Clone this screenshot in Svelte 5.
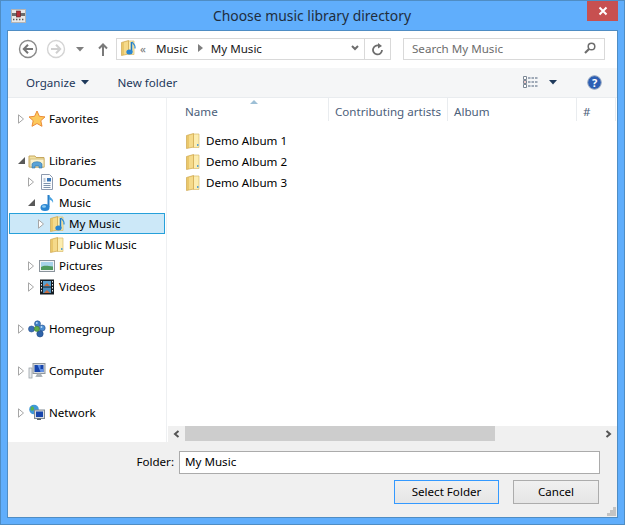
<script>
  const tree = [
    { label: "Favorites", icon: "star", depth: 0, arrow: "closed" },
    { gap: true },
    { label: "Libraries", icon: "library", depth: 0, arrow: "open" },
    { label: "Documents", icon: "doc", depth: 1, arrow: "closed" },
    { label: "Music", icon: "note", depth: 1, arrow: "open" },
    { label: "My Music", icon: "musicfolder", depth: 2, arrow: "closed", selected: true },
    { label: "Public Music", icon: "folder", depth: 2 },
    { label: "Pictures", icon: "picture", depth: 1, arrow: "closed" },
    { label: "Videos", icon: "film", depth: 1, arrow: "closed" },
    { gap: true },
    { label: "Homegroup", icon: "home", depth: 0, arrow: "closed" },
    { gap: true },
    { label: "Computer", icon: "computer", depth: 0, arrow: "closed" },
    { gap: true },
    { label: "Network", icon: "network", depth: 0, arrow: "closed" }
  ];

  const albums = ["Demo Album 1", "Demo Album 2", "Demo Album 3"];
  const columns = [
    { label: "Name", cls: "c-name" },
    { label: "Contributing artists", cls: "c-artist" },
    { label: "Album", cls: "c-album" },
    { label: "#", cls: "c-num" }
  ];
</script>

{#snippet icon(name)}
  <svg class="ico" width="18" height="18" viewBox="0 0 18 18">
    {#if name === "star"}
      <path d="M9 1l2.400 5.300 5.600.6-4.200 3.800 1.200 5.600L9 13.500l-5 2.800 1.200-5.600L1 6.900l5.600-.6z" fill="#fcc95c" stroke="#ec8c38" />
    {:else if name === "library"}
      <path d="M1 4h6l1 1.500h8V15H1z" fill="#f3e2a2" stroke="#c6a75e" />
      <rect x="2" y="7" width="14" height="8" fill="#fbf3d0" stroke="#d4bd7c" />
      <path d="M4 12c1-3 9-3 10 0v4h-3v-2H7v2H4z" fill="#5ba3d6" stroke="#2f74a8" stroke-width=".6" />
    {:else if name === "doc"}
      <path d="M3.500 1.500h8l3 3v12h-11z" fill="#fbfcfe" stroke="#8e9aae" />
      <rect x="9" y="5" width="4" height="3.500" fill="#3c78b8" />
      <path d="M5.500 6h2M5.500 8h2M5.500 10.500h7M5.500 12.500h7M5.500 14.500h7" stroke="#7e93ad" />
    {:else if name === "note"}
      <path d="M10.500 1v12" stroke="#2a7fc8" stroke-width="2" />
      <path d="M11 1c1 3 5 3.500 4 8-.6-2.500-2.500-3-4-3.500z" fill="#4aa3e0" />
      <ellipse cx="7" cy="13.500" rx="4.500" ry="3.500" fill="#2a86d2" />
      <ellipse cx="6" cy="12.500" rx="2" ry="1.200" fill="#8ccbf2" />
    {:else if name === "folder" || name === "musicfolder"}
      <path d="M9 2h6v13.500H9z" fill="#fcedb0" stroke="#d8bb6c" stroke-width=".7" />
      <path d="M2.500 3.500L9.500 1.500V15l-7 1.500z" fill="#eac76a" stroke="#cfa850" stroke-width=".7" />
      <path d="M5 3.500L9 2.500v12l-4 1z" fill="#f5da8a" />
      {#if name === "musicfolder"}
        <path d="M12.500 3v10" stroke="#1f78c4" stroke-width="1.600" />
        <path d="M13 3c2 2 3.500 3 3 6.500" fill="none" stroke="#2f8dd4" stroke-width="1.200" />
        <ellipse cx="10.500" cy="13" rx="3.200" ry="2.500" fill="#2a86d2" />
      {:else}
        <rect x="13" y="12" width="1.500" height="2" fill="#5ba3d6" />
      {/if}
    {:else if name === "picture"}
      <rect x="1.500" y="3.500" width="15" height="11" fill="#f2f4f6" stroke="#8b949c" />
      <rect x="3" y="5" width="12" height="8" fill="#a8d4ea" />
      <path d="M3 10c3-2 6-1.500 12-.5V13H3z" fill="#4f9a5e" />
    {:else if name === "film"}
      <rect x="2" y="1.500" width="14" height="15" fill="#141c22" />
      <rect x="5" y="3" width="8" height="5.500" fill="#5aa0d0" />
      <rect x="5" y="9.500" width="8" height="5.500" fill="#4b8cbc" />
      <path d="M6 8l3-3 3 3M6 15l3-3 3 3" fill="#c96a3c" />
      <path d="M3.500 3v12M14.500 3v12" stroke="#e4e8ec" stroke-dasharray="1.500 1.500" />
    {:else if name === "home"}
      <circle cx="9.500" cy="3.800" r="3" fill="#3f7fc4" stroke="#28528f" stroke-width=".6" />
      <circle cx="3.500" cy="9" r="3" fill="#3a6fb4" stroke="#28528f" stroke-width=".6" />
      <circle cx="14.200" cy="8" r="3" fill="#4a8bd0" stroke="#28528f" stroke-width=".6" />
      <circle cx="12" cy="13.800" r="3.200" fill="#2f63a8" stroke="#214a85" stroke-width=".6" />
      <circle cx="8.800" cy="8.800" r="2.600" fill="#5fae4a" stroke="#3d7a30" stroke-width=".6" />
      <circle cx="8.800" cy="3" r=".9" fill="#bcdcf6" />
      <circle cx="13.500" cy="7" r=".9" fill="#bcdcf6" />
    {:else if name === "computer"}
      <rect x="1" y="6" width="3" height="10" fill="#e8eaec" stroke="#9aa2a8" stroke-width=".8" />
      <rect x="5" y="1.500" width="12" height="10" fill="#d6dade" stroke="#8f979d" />
      <rect x="6.500" y="3" width="9" height="7" fill="#1645ac" />
      <path d="M9.500 3h3v4h3v3h-3z" fill="#5f8fe6" />
      <path d="M9.500 11.500h3l1 2.500h-5zM7.500 14.500h7" fill="#b4babf" stroke="#9aa2a8" stroke-width=".7" />
    {:else if name === "network"}
      <circle cx="6" cy="5.500" r="4.800" fill="#3f98d8" />
      <path d="M3 3c2-1 3 0 3 2s-2 2-3.500 1zM7 7.500c2 0 2.500 1.500 1 2.500z" fill="#58b24a" />
      <rect x="6.500" y="6" width="10" height="8.500" fill="#d8dde2" stroke="#7f8a94" />
      <rect x="8" y="7.500" width="7" height="5.500" fill="#1645ac" />
      <path d="M9 14.500h4v1.500H9z" fill="#59636b" />
    {/if}
  </svg>
{/snippet}

{#snippet caret(dark)}
  <svg class="caret" width="8" height="5" viewBox="0 0 8 5"><path d="M0 0h8L4 4.500z" fill={dark ? "#1e395b" : "#7f7f7f"} /></svg>
{/snippet}

<div class="window">
  <header class="titlebar">
    <svg class="appicon" width="15" height="14" viewBox="0 0 15 14">
      <rect x="0.500" y="0.500" width="14" height="13" fill="#e8e8e8" stroke="#b4b4b4" />
      <rect x="1" y="4" width="13" height="3" fill="#6d6d6d" />
      <rect x="5.500" y="2" width="4" height="6" fill="#b5303a" stroke="#5a2226" stroke-width=".6" />
      <path d="M2 10.500h2M5 10.500h2M8 10.500h2M11 10.500h2" stroke="#555" stroke-dasharray="1 .6" stroke-width="1.500" />
    </svg>
    <h1>Choose music library directory</h1>
    <button class="close" aria-label="Close">
      <svg width="10" height="10" viewBox="0 0 10 10"><path d="M1.500 1.500l7 7M8.500 1.500l-7 7" stroke="#fff" stroke-width="2" /></svg>
    </button>
  </header>

  <div class="client">
    <div class="navbar">
      <svg class="nav-btn" width="20" height="20" viewBox="0 0 20 20">
        <circle cx="10" cy="10" r="8.500" fill="#fff" stroke="#8a8a8a" stroke-width="1.400" />
        <path d="M15 10H6M10 5.800L5.800 10l4.200 4.200" fill="none" stroke="#767676" stroke-width="2" />
      </svg>
      <svg class="nav-btn fwd" width="20" height="20" viewBox="0 0 20 20">
        <circle cx="10" cy="10" r="8.500" fill="#fff" stroke="#d4d4d4" stroke-width="1.400" />
        <path d="M5 10h9M10 5.800l4.200 4.200-4.200 4.200" fill="none" stroke="#d0d0d0" stroke-width="2" />
      </svg>
      <span class="hist">{@render caret(false)}</span>
      <svg class="up" width="10" height="13" viewBox="0 0 10 13"><path d="M5 13V2M1 5.500L5 1.500l4 4" fill="none" stroke="#7a7a7a" stroke-width="2" /></svg>

      <div class="address">
        {@render icon("musicfolder")}
        <span class="chev">«</span>
        <span>Music</span>
        <svg class="sep-arrow" width="5" height="8" viewBox="0 0 5 8"><path d="M0 0l5 4-5 4z" fill="#7f7f7f" /></svg>
        <span>My Music</span>
        <span class="grow"></span>
        <svg class="drop" width="8" height="6" viewBox="0 0 8 6"><path d="M1 1l3 3 3-3" fill="none" stroke="#6d6d6d" stroke-width="2" /></svg>
        <span class="refresh">
          <svg width="12" height="13" viewBox="0 0 12 13"><path d="M10 7a4.500 4.500 0 1 1-3-4.300" fill="none" stroke="#6d6d6d" stroke-width="1.800" /><path d="M6 0l4 3-4 2.500z" fill="#6d6d6d" /></svg>
        </span>
      </div>

      <div class="search">
        <span>Search My Music</span>
        <svg width="12" height="12" viewBox="0 0 12 12"><circle cx="7.500" cy="4.500" r="3.300" fill="none" stroke="#6d6d6d" stroke-width="1.500" /><path d="M5 7l-4 4" stroke="#6d6d6d" stroke-width="2.200" /></svg>
      </div>
    </div>

    <div class="cmdbar">
      <span class="cmd organize">Organize {@render caret(true)}</span>
      <span class="cmd">New folder</span>
      <span class="grow"></span>
      <svg class="views" width="16" height="13" viewBox="0 0 16 13">
        <path d="M.500.500h3v3h-3zM.500 4.500h3v3h-3zM.500 8.500h3v3h-3z" fill="#fff" stroke="#7b8794" />
        <path d="M5 2h10M5 6h10M5 10h10" stroke="#4a5e78" stroke-dasharray="2.500 1" />
        <rect x="1.500" y="5.500" width="1" height="1" fill="#c83a3a" />
      </svg>
      <span class="view-caret">{@render caret(true)}</span>
      <svg class="help" width="15" height="15" viewBox="0 0 15 15">
        <circle cx="7.500" cy="7.500" r="6.800" fill="#2d5fb4" stroke="#98a8c0" />
        <text x="7.500" y="11.500" text-anchor="middle" class="help-q">?</text>
      </svg>
    </div>

    <div class="main">
      <nav class="tree">
        {#each tree as row}
          {#if row.gap}
            <div class="row"></div>
          {:else}
            <div class="row d{row.depth}" class:selected={row.selected}>
              <span class="arrow">
                {#if row.arrow === "closed"}
                  <svg width="6" height="10" viewBox="0 0 6 10"><path d="M.500.800l5 4.200-5 4.200z" fill="#fff" stroke="#a6a6a6" /></svg>
                {:else if row.arrow === "open"}
                  <svg width="7" height="7" viewBox="0 0 7 7"><path d="M7 0v7H0z" fill="#595959" /></svg>
                {/if}
              </span>
              {@render icon(row.icon)}
              <span class="label">{row.label}</span>
            </div>
          {/if}
        {/each}
      </nav>

      <section class="files">
        <div class="cols">
          {#each columns as col}
            <div class="col {col.cls}">{col.label}</div>
          {/each}
          <svg class="sort" width="8" height="4" viewBox="0 0 8 4"><path d="M0 4l4-4 4 4z" fill="#9dbfd6" /></svg>
        </div>
        <div class="list">
          {#each albums as album}
            <div class="file">
              {@render icon("folder")}
              <span class="label">{album}</span>
            </div>
          {/each}
        </div>
        <div class="hscroll">
          <span class="sb-btn"><svg width="7" height="8" viewBox="0 0 7 8"><path d="M5.500 1L2 4l3.500 3" fill="none" stroke="#555" stroke-width="2" /></svg></span>
          <span class="thumb"></span>
          <span class="grow"></span>
          <span class="sb-btn"><svg width="7" height="8" viewBox="0 0 7 8"><path d="M1.500 1L5 4 1.500 7" fill="none" stroke="#555" stroke-width="2" /></svg></span>
        </div>
      </section>
    </div>

    <footer class="bottom">
      <div class="field">
        <label for="folder">Folder:</label>
        <input id="folder" value="My Music" />
      </div>
      <div class="buttons">
        <button class="btn primary">Select Folder</button>
        <button class="btn cancel">Cancel</button>
      </div>
      <svg class="grip" width="9" height="9" viewBox="0 0 9 9">
        <path d="M6 0h3v3H6zM3 3h3v3H3zM6 3h3v3H6zM0 6h3v3H0zM3 6h3v3H3zM6 6h3v3H6z" fill="#c4c4c4" />
      </svg>
    </footer>
  </div>
</div>

<style>
  :global(body) {
    background: #60aefc;
  }

  .window {
    width: 625px;
    height: 525px;
    box-sizing: border-box;
    background: #60aefc;
    border: 1px solid #4f8dc4;
    padding: 0 6px 6px 6px;
    display: flex;
    flex-direction: column;
    font-family: "Noto Sans", "Open Sans", sans-serif;
    font-size: 11.6px;
    color: #000;
  }

  .titlebar {
    height: 29px;
    flex: none;
    display: flex;
    align-items: flex-start;
  }
  .appicon {
    margin: 8px 0 0 4px;
  }
  h1 {
    flex: 1;
    margin: 5px 0 0 0;
    padding-left: 11px;
    text-align: center;
    font-weight: 400;
    font-size: 13.9px;
    line-height: 20px;
    color: #1f2d3c;
  }
  .close {
    width: 31px;
    height: 20px;
    padding: 0;
    border: 0;
    background: #c75050;
    display: flex;
    align-items: center;
    justify-content: center;
  }

  .client {
    flex: 1;
    min-height: 0;
    display: flex;
    flex-direction: column;
    border: 1px solid #4f8dc4;
    background: #fff;
  }

  .navbar {
    height: 37px;
    flex: none;
    box-sizing: border-box;
    padding-bottom: 1px;
    display: flex;
    align-items: center;
  }
  .nav-btn {
    margin-left: 10px;
    flex: none;
  }
  .nav-btn.fwd {
    margin-left: 8px;
  }
  .hist {
    margin-left: 10px;
    display: flex;
  }
  .up {
    margin-left: 14px;
  }
  .address {
    margin-left: 8px;
    width: 275px;
    height: 22px;
    box-sizing: border-box;
    border: 1px solid #d9d9d9;
    padding-bottom: 2px;
    display: flex;
    align-items: center;
    color: #1a1a1a;
    gap: 7px;
  }
  .address .ico {
    margin-left: 2px;
    margin-right: -4px;
  }
  .chev {
    color: #777;
    margin-right: 3px;
  }
  .sep-arrow {
    margin: 0 1px 0 3px;
  }
  .grow {
    flex: 1;
  }
  .drop {
    margin-right: -2px;
  }
  .refresh {
    width: 25px;
    height: 20px;
    margin-bottom: -2px;
    border-left: 1px solid #d9d9d9;
    display: flex;
    align-items: center;
    justify-content: center;
  }
  .search {
    margin-left: 12px;
    width: 202px;
    height: 22px;
    box-sizing: border-box;
    border: 1px solid #d9d9d9;
    display: flex;
    align-items: center;
    justify-content: space-between;
    padding: 0 8px 2px 8px;
    color: #6d6d6d;
  }

  .cmdbar {
    height: 30px;
    flex: none;
    box-sizing: border-box;
    background: #f5f6f7;
    border-bottom: 1px solid #e9ecef;
    display: flex;
    align-items: center;
    padding-left: 18px;
  }
  .cmd {
    color: #1e395b;
  }
  .organize {
    display: flex;
    align-items: center;
    gap: 5px;
    margin-right: 29px;
  }
  .views {
    margin-right: 10px;
  }
  .view-caret {
    display: flex;
    margin-right: 30px;
  }
  .help {
    margin-right: 15px;
  }
  .help-q {
    font-size: 11px;
    font-weight: 700;
    fill: #fff;
  }

  .main {
    flex: 1;
    min-height: 0;
    display: flex;
  }
  .tree {
    width: 159px;
    flex: none;
    box-sizing: border-box;
    border-right: 1px solid #eef0f2;
    padding: 10px 1px 0 1px;
  }
  .row {
    height: 21px;
    box-sizing: border-box;
    display: flex;
    align-items: center;
    color: #000;
  }
  .row .ico {
    margin-right: 3px;
  }
  .label {
    padding-bottom: 1px;
  }
  .row.d0 {
    padding-left: 9px;
  }
  .row.d1 {
    padding-left: 19px;
  }
  .row.d2 {
    padding-left: 29px;
  }
  .row.selected {
    background: #cce8f8;
    border: 1px solid #26a0da;
    padding-left: 28px;
  }
  .arrow {
    width: 9px;
    display: flex;
    align-items: center;
    flex: none;
    margin-right: 1px;
  }

  .files {
    flex: 1;
    min-width: 0;
    display: flex;
    flex-direction: column;
  }
  .cols {
    height: 26px;
    flex: none;
    display: flex;
    position: relative;
    color: #4c607a;
  }
  .col {
    box-sizing: border-box;
    padding: 4px 0 0 6px;
    line-height: 20px;
    height: 23px;
    border-right: 1px solid #e9ecef;
    white-space: nowrap;
  }
  .c-name {
    width: 162px;
    padding-left: 18px;
  }
  .c-artist {
    width: 119px;
  }
  .c-album {
    width: 129px;
  }
  .c-num {
    width: 39px;
  }
  .sort {
    position: absolute;
    left: 83px;
    top: 2px;
  }
  .list {
    flex: 1;
    padding: 6px 0 0 17px;
  }
  .file {
    height: 21px;
    display: flex;
    align-items: center;
    gap: 4px;
    color: #000;
  }
  .hscroll {
    height: 16px;
    flex: none;
    box-sizing: border-box;
    padding-bottom: 1px;
    margin-left: 1px;
    background: #f0f0f0;
    display: flex;
  }
  .sb-btn {
    width: 17px;
    display: flex;
    align-items: center;
    justify-content: center;
  }
  .thumb {
    width: 310px;
    background: #cdcdcd;
  }

  .bottom {
    height: 75px;
    flex: none;
    box-sizing: border-box;
    background: #f0f0f0;
    padding: 9px 0 0 0;
    position: relative;
  }
  .field {
    display: flex;
    align-items: center;
    justify-content: flex-end;
    gap: 5px;
    padding-right: 17px;
  }
  label {
    color: #000;
    padding-bottom: 2px;
  }
  input {
    width: 421px;
    height: 23px;
    box-sizing: border-box;
    border: 1px solid #ababab;
    background: #fff;
    font: inherit;
    padding: 0 0 2px 5px;
    margin: 0;
    outline: none;
  }
  .buttons {
    display: flex;
    justify-content: flex-end;
    gap: 14px;
    padding: 6px 18px 0 0;
  }
  .btn {
    height: 24px;
    box-sizing: border-box;
    font: inherit;
    padding: 0 0 2px 0;
    color: #000;
    background: linear-gradient(#f0f0f0, #e5e5e5);
    border: 1px solid #acacac;
  }
  .primary {
    width: 105px;
    border-color: #3399ff;
  }
  .cancel {
    width: 86px;
  }
  .grip {
    position: absolute;
    right: 1px;
    bottom: 1px;
  }
</style>
